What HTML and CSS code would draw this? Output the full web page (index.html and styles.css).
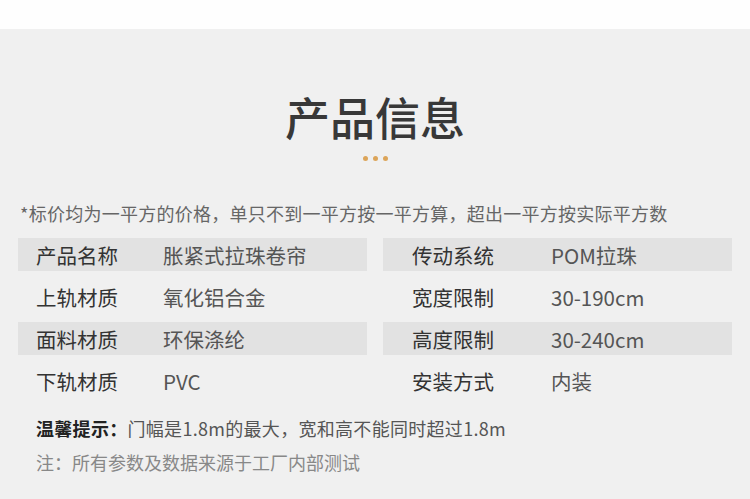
FILE: index.html
```html
<!DOCTYPE html>
<html lang="zh-CN">
<head>
<meta charset="utf-8">
<link rel="stylesheet" href="styles.css">
</head>
<body>
<div class="top"></div>
<main class="main">
  <h1 class="title">产品信息</h1>
  <div class="dots"><span></span><span></span><span></span></div>
  <p class="note">*标价均为一平方的价格，单只不到一平方按一平方算，超出一平方按实际平方数</p>
  <div class="grid">
    <div class="cell shade left"><span class="label">产品名称</span><span class="value">胀紧式拉珠卷帘</span></div>
    <div class="cell shade right"><span class="label">传动系统</span><span class="value">POM拉珠</span></div>
    <div class="cell left"><span class="label">上轨材质</span><span class="value">氧化铝合金</span></div>
    <div class="cell right"><span class="label">宽度限制</span><span class="value">30-190cm</span></div>
    <div class="cell shade left"><span class="label">面料材质</span><span class="value">环保涤纶</span></div>
    <div class="cell shade right"><span class="label">高度限制</span><span class="value">30-240cm</span></div>
    <div class="cell left"><span class="label">下轨材质</span><span class="value">PVC</span></div>
    <div class="cell right"><span class="label">安装方式</span><span class="value">内装</span></div>
  </div>
  <p class="tip"><b>温馨提示：</b>门幅是1.8m的最大，宽和高不能同时超过1.8m</p>
  <p class="foot">注：所有参数及数据来源于工厂内部测试</p>
</main>
</body>
</html>
```
FILE: styles.css
```css
* { box-sizing: border-box; }
html, body {
  margin: 0;
  padding: 0;
}
body {
  width: 750px;
  height: 499px;
  overflow: hidden;
  background: #f0f0f0;
  font-family: "Noto Sans CJK SC", "Noto Sans", sans-serif;
  color: #333;
}
.top {
  height: 29px;
  background: #fefefe;
}
.title {
  margin: 58px 0 0;
  height: 60px;
  line-height: 60px;
  font-size: 45px;
  font-weight: 500;
  text-align: center;
  color: #383838;
}
.dots {
  display: flex;
  justify-content: center;
  gap: 5px;
  margin-top: 9px;
  height: 5px;
}
.dots span {
  width: 5px;
  height: 5px;
  border-radius: 50%;
  background: #dca55a;
}
.note {
  margin: 39px 0 0;
  padding-left: 20px;
  font-size: 18px;
  letter-spacing: 0.25px;
  line-height: 26px;
  color: #666;
}
.grid {
  margin: 12px 18px 0;
  display: grid;
  grid-template-columns: 349px 349px;
  column-gap: 16px;
  row-gap: 9px;
}
.cell {
  height: 33px;
  display: flex;
  align-items: center;
  font-size: 20.5px;
}
.shade { background: #e2e2e2; }
.left { padding-left: 18px; }
.right { padding-left: 29px; }
.label {
  color: #333;
}
.left .label { width: 127px; }
.right .label { width: 139px; }
.value {
  color: #555;
}
.tip {
  margin: 18px 0 0;
  padding-left: 36px;
  font-size: 18px;
  letter-spacing: 0.3px;
  line-height: 26px;
  color: #555;
}
.tip b {
  color: #222;
  font-weight: 700;
}
.foot {
  margin: 8px 0 0;
  padding-left: 36px;
  font-size: 18px;
  line-height: 26px;
  color: #888;
}
```
